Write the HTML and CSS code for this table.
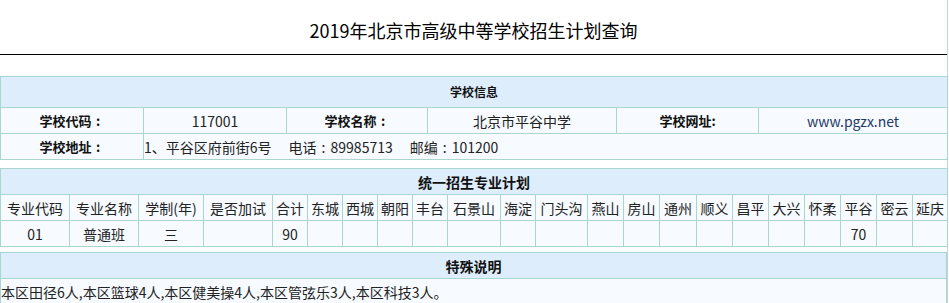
FILE: index.html
```html
<!DOCTYPE html>
<html lang="zh-CN">
<head>
<meta charset="utf-8">
<title>2019年北京市高级中等学校招生计划查询</title>
<link rel="stylesheet" href="styles.css">
</head>
<body>
<div class="page">
  <div class="title">2019年北京市高级中等学校招生计划查询</div>

  <table class="tbl info">
    <colgroup>
      <col style="width:143px"><col style="width:143px"><col style="width:141px"><col style="width:189px"><col style="width:142px"><col style="width:189px">
    </colgroup>
    <tr class="head head-tall"><td colspan="6">学校信息</td></tr>
    <tr>
      <td class="label">学校代码<span class="colon">:</span></td>
      <td>117001</td>
      <td class="label">学校名称<span class="colon">:</span></td>
      <td>北京市平谷中学</td>
      <td class="label">学校网址:</td>
      <td class="link">www.pgzx.net</td>
    </tr>
    <tr>
      <td class="label">学校地址<span class="colon">:</span></td>
      <td colspan="5" class="left">1、平谷区府前街6号<span class="sp">电话<span class="colon">:</span>89985713</span><span class="sp">邮编<span class="colon">:</span>101200</span></td>
    </tr>
  </table>

  <table class="tbl plan">
    <colgroup>
      <col style="width:69px"><col style="width:69px"><col style="width:65px"><col style="width:69px"><col style="width:35px"><col style="width:35px"><col style="width:35px"><col style="width:35px"><col style="width:35px"><col style="width:53px"><col style="width:35px"><col style="width:52px"><col style="width:36px"><col style="width:36px"><col style="width:37px"><col style="width:36px"><col style="width:36px"><col style="width:36px"><col style="width:36px"><col style="width:36px"><col style="width:36px"><col style="width:35px">
    </colgroup>
    <tr class="head"><td colspan="22">统一招生专业计划</td></tr>
    <tr>
      <td>专业代码</td><td>专业名称</td><td>学制(年)</td><td>是否加试</td><td>合计</td><td>东城</td><td>西城</td><td>朝阳</td><td>丰台</td><td>石景山</td><td>海淀</td><td>门头沟</td><td>燕山</td><td>房山</td><td>通州</td><td>顺义</td><td>昌平</td><td>大兴</td><td>怀柔</td><td>平谷</td><td>密云</td><td>延庆</td>
    </tr>
    <tr>
      <td>01</td><td>普通班</td><td>三</td><td></td><td>90</td><td></td><td></td><td></td><td></td><td></td><td></td><td></td><td></td><td></td><td></td><td></td><td></td><td></td><td></td><td>70</td><td></td><td></td>
    </tr>
  </table>

  <table class="tbl note">
    <tr class="head head-big"><td>特殊说明</td></tr>
    <tr><td class="left">本区田径6人,本区篮球4人,本区健美操4人,本区管弦乐3人,本区科技3人。</td></tr>
  </table>
</div>
</body>
</html>
```

FILE: styles.css
```css
html, body {
  margin: 0;
  padding: 0;
  background: #ffffff;
}

body {
  font-family: "Noto Sans CJK SC", "Noto Sans", sans-serif;
  color: #222;
}

.page {
  width: 947px;
  border-right: 1px solid #b6dcd6;
  min-height: 303px;
}

.title {
  height: 54px;
  line-height: 60px;
  text-align: center;
  font-size: 18px;
  color: #000;
  border-bottom: 1px solid #000;
}

.tbl {
  width: 947px;
  table-layout: fixed;
  border-collapse: collapse;
  font-size: 14px;
}

.tbl td {
  border: 1px solid #a9d6cf;
  background: #f7fbff;
  height: 25px;
  padding: 0 2px;
  text-align: center;
  white-space: nowrap;
  line-height: 18px;
  color: #222;
}

.tbl .head td {
  background: #deedfc;
  font-weight: bold;
  color: #111;
}

.info {
  margin-top: 21px;
}

.info .head-tall td {
  height: 30px;
  font-size: 12px;
}

.info .label {
  font-weight: bold;
  font-size: 13px;
  color: #111;
}

.colon {
  display: inline-block;
  width: 1em;
  text-align: center;
}

.tbl td.left {
  text-align: left;
  padding-left: 0;
}

.sp {
  margin-left: 17px;
}

.tbl td.link {
  color: #1d3a66;
}

.plan {
  margin-top: 8px;
}

.note {
  margin-top: 5px;
}
```
